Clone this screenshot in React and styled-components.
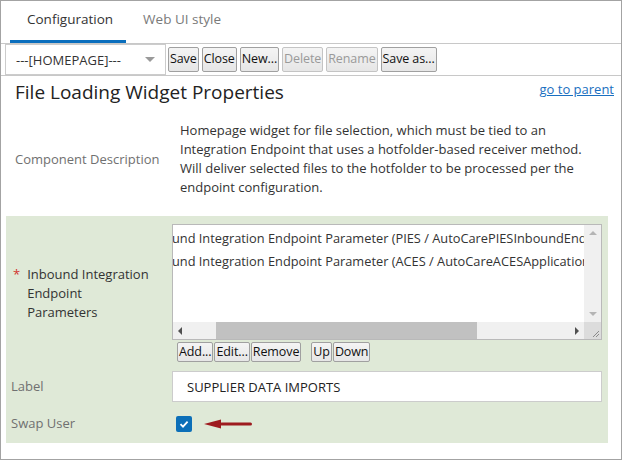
import React from "react";
import styled, { createGlobalStyle } from "styled-components";

const GlobalStyle = createGlobalStyle`
  body {
    margin: 0;
    background: #ffffff;
    font-family: "Open Sans", "Noto Sans", sans-serif;
    color: #333333;
  }
`;

const Frame = styled.div`
  box-sizing: border-box;
  width: 622px;
  height: 460px;
  border: 1px solid #a3a3a3;
  background: #ffffff;
  display: flex;
  flex-direction: column;
`;

const TabBar = styled.div`
  display: flex;
  height: 42px;
  padding-left: 9px;
  border-bottom: 1px solid #c8c8c8;
`;

const Tab = styled.div`
  box-sizing: border-box;
  height: 42px;
  padding: 0 13px 0 17px;
  display: flex;
  align-items: center;
  font-size: 13.5px;
  color: ${(p) => (p.active ? "#333333" : "#7a7a7a")};
  border-bottom: 3px solid ${(p) => (p.active ? "#0a6ebd" : "transparent")};
  padding-bottom: 3px;
`;

const Toolbar = styled.div`
  display: flex;
  align-items: center;
  gap: 2px;
  height: 31px;
  padding-left: 4px;
  border-bottom: 1px solid #c8c8c8;
`;

const Select = styled.div`
  box-sizing: border-box;
  width: 161px;
  height: 31px;
  border: 1px solid #cccccc;
  display: flex;
  align-items: center;
  justify-content: space-between;
  padding: 0 10px 0 10px;
  font-size: 13px;
  color: #333333;
`;

const Caret = styled.span`
  width: 0;
  height: 0;
  border-left: 5px solid transparent;
  border-right: 5px solid transparent;
  border-top: 5px solid #9a9a9a;
`;

const Btn = styled.button`
  box-sizing: border-box;
  height: ${(p) => (p.small ? "20px" : "25px")};
  padding: 0 1px;
  border: 1px solid #a0a0a0;
  border-radius: 2px;
  background: linear-gradient(#f4f4f4, #e6e6e6);
  font-family: "Open Sans", "Noto Sans", sans-serif;
  font-size: 12.5px;
  letter-spacing: -0.1px;
  color: ${(p) => (p.disabled ? "#9a9a9a" : "#111111")};
  border-color: ${(p) => (p.disabled ? "#c4c4c4" : "#a0a0a0")};
  line-height: 1;
`;

const ButtonGroup = styled.div`
  display: flex;
  gap: ${(p) => p.gap || "3px"};
`;

const HeaderRow = styled.div`
  display: flex;
  justify-content: space-between;
  align-items: flex-start;
  padding: 3px 7px 0 14px;
  height: 42px;
`;

const Heading = styled.h1`
  margin: 0;
  font-weight: normal;
  font-size: 19px;
  color: #222222;
`;

const ParentLink = styled.a`
  font-size: 13px;
  color: #1a6fc0;
  text-decoration: underline;
  margin-top: 1px;
`;

const FormRow = styled.div`
  display: grid;
  grid-template-columns: ${(p) => p.cols || "165px 1fr"};
  align-items: center;
  margin-top: ${(p) => p.top || "0"};
`;

const FieldLabel = styled.div`
  font-size: 13px;
  color: ${(p) => (p.strong ? "#333333" : "#707070")};
  line-height: 19px;
  padding-left: ${(p) => p.indent || "0"};
  display: flex;
  gap: 7px;
`;

const Required = styled.span`
  color: #d2322d;
  font-size: 13px;
`;

const Description = styled.div`
  font-size: 13px;
  line-height: 19px;
  color: #333333;
  padding: 0 22px 0 0;
`;

const DescRow = styled(FormRow)`
  padding: 0 0 0 14px;
  margin-bottom: 19px;
`;

const Panel = styled.div`
  margin: 0 13px 0 5px;
  background: #dfe9d7;
  padding: 8px 6px 10px 4px;
  display: flex;
  flex-direction: column;
`;

const ControlCol = styled.div`
  display: flex;
  flex-direction: column;
  gap: 2px;
`;

const ListBox = styled.div`
  box-sizing: border-box;
  height: 116px;
  border: 1px solid #b9b9b9;
  background: #ffffff;
  display: grid;
  grid-template-columns: 1fr 17px;
  grid-template-rows: 1fr 17px;
`;

const ListItems = styled.div`
  overflow: hidden;
  padding-top: 2px;
`;

const ListItem = styled.div`
  white-space: nowrap;
  margin-left: -28px;
  font-size: 12.8px;
  line-height: 23px;
  color: #333333;
`;

const VScroll = styled.div`
  background: #f0f0f0;
  display: flex;
  flex-direction: column;
  justify-content: space-between;
  align-items: center;
  padding: 6px 0;
`;

const HScroll = styled.div`
  background: #f0f0f0;
  display: flex;
  align-items: center;
  padding: 0 5px 0 5px;
`;

const Thumb = styled.div`
  height: 17px;
  width: 261px;
  margin-left: 34px;
  background: #c1c1c1;
`;

const Spacer = styled.span`
  flex: 1;
`;

const Arrow = styled.span`
  width: 0;
  height: 0;
  ${(p) =>
    p.dir === "up"
      ? `border-left: 4px solid transparent; border-right: 4px solid transparent; border-bottom: 4px solid ${p.color};`
      : p.dir === "down"
      ? `border-left: 4px solid transparent; border-right: 4px solid transparent; border-top: 4px solid ${p.color};`
      : p.dir === "left"
      ? `border-top: 4px solid transparent; border-bottom: 4px solid transparent; border-right: 4px solid ${p.color};`
      : `border-top: 4px solid transparent; border-bottom: 4px solid transparent; border-left: 4px solid ${p.color};`}
`;

const Corner = styled.div`
  background: #dcdcdc;
  display: flex;
  align-items: flex-end;
  justify-content: flex-end;
`;

const ListButtons = styled.div`
  display: flex;
  gap: 10px;
  padding-left: 5px;
`;

const TextInput = styled.div`
  box-sizing: border-box;
  height: 31px;
  border: 1px solid #cccccc;
  background: #ffffff;
  display: flex;
  align-items: center;
  padding-left: 14px;
  font-size: 13px;
  color: #222222;
`;

const CheckLine = styled.div`
  display: flex;
  align-items: center;
  gap: 12px;
  padding-left: 4px;
`;

const CheckBox = styled.div`
  width: 16px;
  height: 16px;
  border-radius: 2px;
  background: #0c6fb8;
  display: flex;
  align-items: center;
  justify-content: center;
`;

const listItems = [
  "Inbound Integration Endpoint Parameter (PIES / AutoCarePIESInboundEndpoint)",
  "Inbound Integration Endpoint Parameter (ACES / AutoCareACESApplicationsInbound)",
];

export default function App() {
  return (
    <>
      <GlobalStyle />
      <Frame>
        <TabBar>
          <Tab active>Configuration</Tab>
          <Tab>Web UI style</Tab>
        </TabBar>
        <Toolbar>
          <Select>
            <span>---[HOMEPAGE]---</span>
            <Caret />
          </Select>
          <ButtonGroup>
            <Btn>Save</Btn>
            <Btn>Close</Btn>
            <Btn>New...</Btn>
            <Btn disabled>Delete</Btn>
            <Btn disabled>Rename</Btn>
            <Btn>Save as...</Btn>
          </ButtonGroup>
        </Toolbar>
        <HeaderRow>
          <Heading>File Loading Widget Properties</Heading>
          <ParentLink href="#">go to parent</ParentLink>
        </HeaderRow>
        <DescRow>
          <FieldLabel>Component Description</FieldLabel>
          <Description>
            Homepage widget for file selection, which must be tied to an
            Integration Endpoint that uses a hotfolder-based receiver method.
            Will deliver selected files to the hotfolder to be processed per the
            endpoint configuration.
          </Description>
        </DescRow>
        <Panel>
          <FormRow cols="162px 1fr">
            <FieldLabel strong indent="3px">
              <Required>*</Required>
              <span>
                Inbound Integration
                <br />
                Endpoint
                <br />
                Parameters
              </span>
            </FieldLabel>
            <ControlCol>
              <ListBox>
                <ListItems>
                  {listItems.map((t) => (
                    <ListItem key={t}>{t}</ListItem>
                  ))}
                </ListItems>
                <VScroll>
                  <Arrow dir="up" color="#b5b5b5" />
                  <Arrow dir="down" color="#b5b5b5" />
                </VScroll>
                <HScroll>
                  <Arrow dir="left" color="#505050" />
                  <Thumb />
                  <Spacer />
                  <Arrow dir="right" color="#505050" />
                </HScroll>
                <Corner>
                  <svg width="17" height="17" viewBox="0 0 17 17">
                    <path d="M15 9 L9 15 M15 12 L12 15" stroke="#8a8a8a" strokeWidth="1" />
                  </svg>
                </Corner>
              </ListBox>
              <ListButtons>
                <ButtonGroup gap="1px">
                  <Btn small>Add...</Btn>
                  <Btn small>Edit...</Btn>
                  <Btn small>Remove</Btn>
                </ButtonGroup>
                <ButtonGroup gap="1px">
                  <Btn small>Up</Btn>
                  <Btn small>Down</Btn>
                </ButtonGroup>
              </ListButtons>
            </ControlCol>
          </FormRow>
          <FormRow cols="162px 1fr" top="9px">
            <FieldLabel indent="1px">Label</FieldLabel>
            <TextInput>SUPPLIER DATA IMPORTS</TextInput>
          </FormRow>
          <FormRow cols="162px 1fr" top="12px">
            <FieldLabel indent="1px">Swap User</FieldLabel>
            <CheckLine>
              <CheckBox>
                <svg width="12" height="12" viewBox="0 0 12 12">
                  <path d="M2.5 6.2 L5 8.6 L9.6 3.6" stroke="#ffffff" strokeWidth="1.8" fill="none" />
                </svg>
              </CheckBox>
              <svg width="50" height="10" viewBox="0 0 50 10">
                <path d="M0 5 L17 0.5 L17 9.5 Z" fill="#9e1b1f" />
                <rect x="16" y="3.5" width="32" height="3" rx="1.5" fill="#9e1b1f" />
              </svg>
            </CheckLine>
          </FormRow>
        </Panel>
      </Frame>
    </>
  );
}
